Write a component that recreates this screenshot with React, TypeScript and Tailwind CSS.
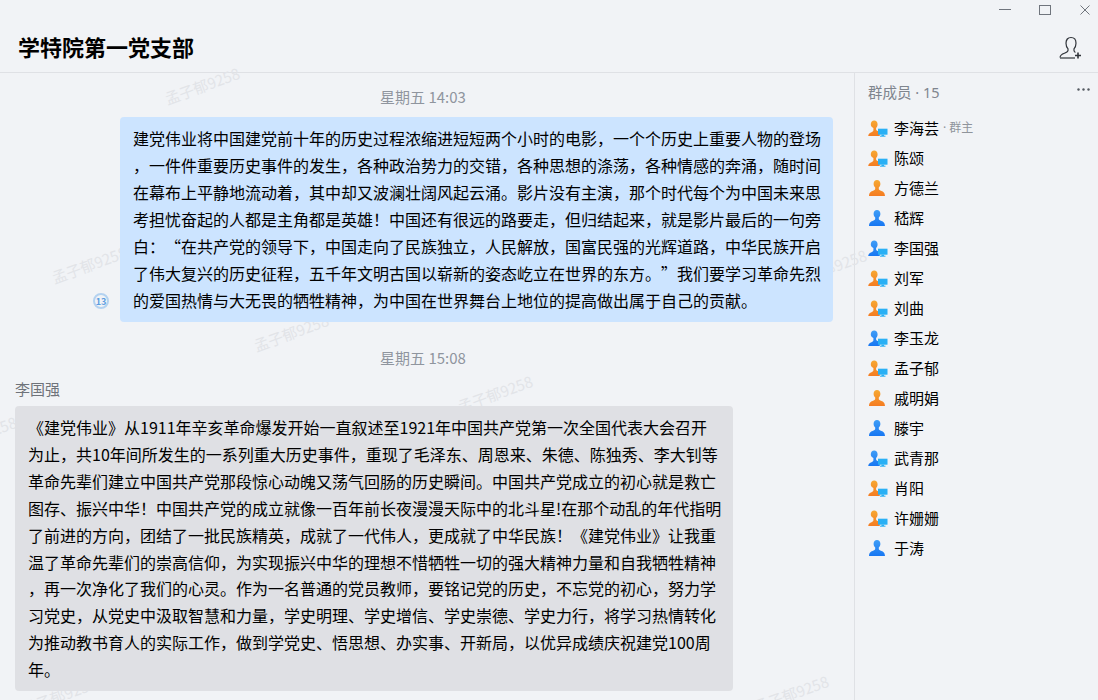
const FONT = "font-['Noto_Sans_CJK_SC','Microsoft_YaHei',sans-serif]";

const mine = [
  "建党伟业将中国建党前十年的历史过程浓缩进短短两个小时的电影，一个个历史上重要人物的登场",
  "，一件件重要历史事件的发生，各种政治势力的交错，各种思想的涤荡，各种情感的奔涌，随时间",
  "在幕布上平静地流动着，其中却又波澜壮阔风起云涌。影片没有主演，那个时代每个为中国未来思",
  "考担忧奋起的人都是主角都是英雄！中国还有很远的路要走，但归结起来，就是影片最后的一句旁",
  <>
    白：<span className="inline-block w-[16px] text-right">“</span>
    在共产党的领导下，中国走向了民族独立，人民解放，国富民强的光辉道路，中华民族开启
  </>,
  <>
    了伟大复兴的历史征程，五千年文明古国以崭新的姿态屹立在世界的东方。
    <span className="inline-block w-[16px] text-left">”</span>我们要学习革命先烈
  </>,
  "的爱国热情与大无畏的牺牲精神，为中国在世界舞台上地位的提高做出属于自己的贡献。",
];

const theirs = [
  "《建党伟业》从1911年辛亥革命爆发开始一直叙述至1921年中国共产党第一次全国代表大会召开",
  "为止，共10年间所发生的一系列重大历史事件，重现了毛泽东、周恩来、朱德、陈独秀、李大钊等",
  "革命先辈们建立中国共产党那段惊心动魄又荡气回肠的历史瞬间。中国共产党成立的初心就是救亡",
  "图存、振兴中华！中国共产党的成立就像一百年前长夜漫漫天际中的北斗星!在那个动乱的年代指明",
  "了前进的方向，团结了一批民族精英，成就了一代伟人，更成就了中华民族！《建党伟业》让我重",
  "温了革命先辈们的崇高信仰，为实现振兴中华的理想不惜牺牲一切的强大精神力量和自我牺牲精神",
  "，再一次净化了我们的心灵。作为一名普通的党员教师，要铭记党的历史，不忘党的初心，努力学",
  "习党史，从党史中汲取智慧和力量，学史明理、学史增信、学史崇德、学史力行，将学习热情转化",
  "为推动教书育人的实际工作，做到学党史、悟思想、办实事、开新局，以优异成绩庆祝建党100周",
  "年。",
];

const members: { name: string; color: "o" | "b"; pc: boolean }[] = [
  { name: "李海芸", color: "o", pc: true },
  { name: "陈颂", color: "o", pc: true },
  { name: "方德兰", color: "o", pc: false },
  { name: "嵇辉", color: "b", pc: false },
  { name: "李国强", color: "b", pc: true },
  { name: "刘军", color: "o", pc: true },
  { name: "刘曲", color: "o", pc: true },
  { name: "李玉龙", color: "b", pc: true },
  { name: "孟子郁", color: "o", pc: true },
  { name: "戚明娟", color: "o", pc: false },
  { name: "滕宇", color: "b", pc: false },
  { name: "武青那", color: "b", pc: true },
  { name: "肖阳", color: "o", pc: true },
  { name: "许姗姗", color: "o", pc: true },
  { name: "于涛", color: "b", pc: false },
];

const marks = [
  "left-[163px] top-[76px]",
  "left-[50px] top-[255px]",
  "left-[252px] top-[323px]",
  "left-[456px] top-[384px]",
  "left-[-60px] top-[425px]",
  "left-[752px] top-[684px]",
  "left-[20px] top-[686px]",
  "left-[790px] top-[258px]",
];

function PersonIcon({ color, pc }: { color: "o" | "b"; pc: boolean }) {
  const id = "grad-" + color;
  return (
    <svg width="20" height="18" viewBox="0 0 20 18" className="shrink-0">
      <defs>
        <linearGradient id={id} x1="0" y1="0" x2="0" y2="1">
          <stop offset="0" stopColor={color === "o" ? "#f6a832" : "#3f9df6"} />
          <stop offset="1" stopColor={color === "o" ? "#f57c22" : "#1877f2"} />
        </linearGradient>
      </defs>
      {pc ? (
        <>
          <path
            d="M6.200 1.500c2 0 3.400 1.500 3.400 3.700 0 1.600-.7 2.900-1.500 3.700v1.500c0 .8 1 1.300 2.600 1.900l1 .4V17H.200c.3-2.400 1.700-3.200 3.300-3.800 1.300-.5 1.900-1 1.900-1.900v-2.400C3.600 8.100 2.800 6.800 2.800 5.200c0-2.200 1.400-3.700 3.400-3.700z"
            fill={`url(#${id})`}
          />
          <rect x="10" y="9.700" width="9.500" height="6" fill="#29b0f5" />
          <rect x="13.500" y="15.700" width="2.500" height="1.300" fill="#29b0f5" />
          <rect x="12" y="16.700" width="5.500" height="1" fill="#29b0f5" />
        </>
      ) : (
        <path
          d="M9 1c2 0 3.400 1.500 3.400 3.800 0 1.700-.7 3-1.600 3.800v1.500c0 .8 1 1.300 2.700 2 1.800.7 3.200 1.500 3.500 4.900H1c.3-3.400 1.700-4.200 3.500-4.900 1.700-.7 2.700-1.200 2.700-2V8.600C6.300 7.800 5.600 6.500 5.600 4.800 5.600 2.500 7 1 9 1z"
          fill={`url(#${id})`}
        />
      )}
    </svg>
  );
}

export default function App() {
  return (
    <div className={`${FONT} relative flex h-[700px] w-[1098px] flex-col overflow-hidden bg-[#f1f3f6] text-black [text-spacing-trim:space-all]`}>
      {/* title bar */}
      <div className="relative h-[73px] shrink-0 border-b border-[#dfe1e5]">
        <div className="flex h-[20px] items-center justify-end gap-[28px] pr-[7px] text-[#70757d]">
          <svg width="12" height="12" viewBox="0 0 12 12" fill="none" stroke="currentColor"><path d="M0 5.500h12" /></svg>
          <svg width="12" height="12" viewBox="0 0 12 12" fill="none" stroke="currentColor"><rect x=".5" y="1.500" width="11" height="9" /></svg>
          <svg width="12" height="12" viewBox="0 0 12 12" fill="none" stroke="currentColor"><path d="M1.500 1.500l9 9M10.500 1.500l-9 9" /></svg>
        </div>
        <div className="flex items-center justify-between pl-[18px] pr-[14px] pt-[6px]">
          <h1 className="text-[22px] font-bold leading-[40px]">学特院第一党支部</h1>
          <svg width="26" height="26" viewBox="0 0 26 26" fill="none" stroke="#30343a" strokeWidth="1.200" className="mt-[4px]">
            <path d="M2 22.500c.3-2.600 2-3.500 4.400-4.300 2.300-.8 3.600-1.400 3.600-2.600v-1.800C8.700 12.400 8 10.500 8 8.200 8 4.800 10 2.500 13 2.500s5 2.300 5 5.700c0 2.300-.7 4.200-2 5.600v1.800c0 .8.500 1.300 1.400 1.800" />
            <path d="M2 23h15" />
            <path d="M20 17.500v6M17 20.500h6" strokeWidth="1.600" />
          </svg>
        </div>
      </div>

      <div className="flex min-h-0 flex-1">
        {/* chat */}
        <div className="min-w-0 flex-1 overflow-hidden">
          <div className="pr-[8px] pt-[14px] text-center text-[15px] leading-[20px] text-[#8f959e]">星期五 14:03</div>
          <div className="mt-[10px] flex items-end justify-end gap-[11px] pr-[21px]">
            <div className="relative z-10 mb-[13px] flex size-[16px] items-center justify-center rounded-full border-2 border-[#b4d2f0] text-[9px] font-semibold leading-none text-[#5c9ce0]">
              13
            </div>
            <div className="relative z-10 w-[713px] rounded-[4px] bg-[#cce4ff] px-[13px] py-[8px] text-[16px] leading-[27px] whitespace-nowrap">
              {mine.map((l, i) => (
                <div key={i}>{l}</div>
              ))}
            </div>
          </div>
          <div className="mt-[26px] pr-[8px] text-center text-[15px] leading-[20px] text-[#8f959e]">星期五 15:08</div>
          <div className="mt-[11px] pl-[15px] text-[15px] leading-[20px] text-[#6f737a]">李国强</div>
          <div className="relative z-10 ml-[15px] mt-[7px] w-[718px] rounded-[4px] bg-[#dfe0e4] px-[13px] py-[8px] text-[16px] leading-[26.900px] whitespace-nowrap">
            {theirs.map((l, i) => (
              <div key={i}>{l}</div>
            ))}
          </div>
        </div>

        {/* members */}
        <div className="w-[244px] shrink-0 border-l border-[#dfe1e5] pl-[13px] pr-[8px]">
          <div className="flex items-center justify-between pt-[9px] leading-[20px]">
            <span className="font-['Noto_Sans','Noto_Sans_CJK_SC',sans-serif] text-[14.500px] text-[#7f858e]">群成员 · 15</span>
            <svg width="13" height="3" viewBox="0 0 13 3" fill="#555a62" className="mb-[6px]">
              <circle cx="1.500" cy="1.500" r="1.200" />
              <circle cx="6.500" cy="1.500" r="1.200" />
              <circle cx="11.500" cy="1.500" r="1.200" />
            </svg>
          </div>
          <div className="mt-[11px]">
            {members.map((m) => (
              <div key={m.name} className="flex h-[30px] items-center gap-[6px]">
                <PersonIcon color={m.color} pc={m.pc} />
                <span className="text-[15px] leading-[20px]">{m.name}</span>
                {m.name === "李海芸" && (
                  <span className="-ml-[2px] font-['Noto_Sans','Noto_Sans_CJK_SC',sans-serif] text-[12px] text-[#8f949b]">· 群主</span>
                )}
              </div>
            ))}
          </div>
        </div>
      </div>

      {/* watermark */}
      {marks.map((p) => (
        <span
          key={p}
          className={`pointer-events-none absolute ${p} z-0 -rotate-[20deg] text-[15px] leading-[20px] whitespace-nowrap text-[#e2e4e8]`}
        >
          孟子郁9258
        </span>
      ))}
    </div>
  );
}
